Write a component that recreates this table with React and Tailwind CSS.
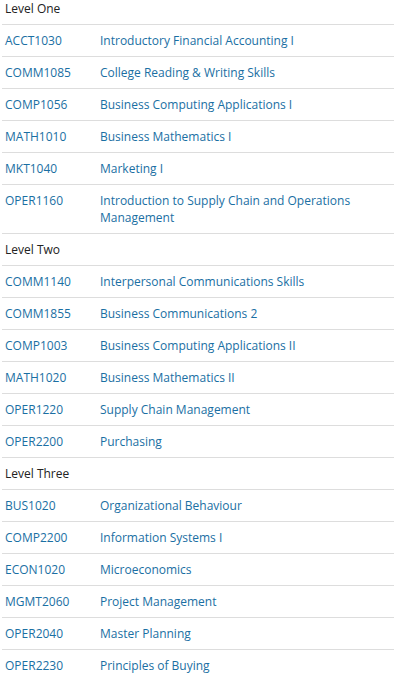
const levels = [
  {
    name: 'Level One',
    courses: [
      ['ACCT1030', 'Introductory Financial Accounting I'],
      ['COMM1085', 'College Reading & Writing Skills'],
      ['COMP1056', 'Business Computing Applications I'],
      ['MATH1010', 'Business Mathematics I'],
      ['MKT1040', 'Marketing I'],
      ['OPER1160', 'Introduction to Supply Chain and Operations Management'],
    ],
  },
  {
    name: 'Level Two',
    courses: [
      ['COMM1140', 'Interpersonal Communications Skills'],
      ['COMM1855', 'Business Communications 2'],
      ['COMP1003', 'Business Computing Applications II'],
      ['MATH1020', 'Business Mathematics II'],
      ['OPER1220', 'Supply Chain Management'],
      ['OPER2200', 'Purchasing'],
    ],
  },
  {
    name: 'Level Three',
    courses: [
      ['BUS1020', 'Organizational Behaviour'],
      ['COMP2200', 'Information Systems I'],
      ['ECON1020', 'Microeconomics'],
      ['MGMT2060', 'Project Management'],
      ['OPER2040', 'Master Planning'],
      ['OPER2230', 'Principles of Buying'],
    ],
  },
];

function App() {
  return (
    <div className="bg-white min-h-screen overflow-hidden" style={{ fontFamily: '"Open Sans", sans-serif' }}>
      <div className="-mt-2 ml-[2px] text-[12px] leading-[17px]">
        {levels.map((level) => (
          <div key={level.name}>
            {/* Level header */}
            <div className="border-t border-[#dddddd] pl-[3px] py-[7px] text-[#222222]">
              {level.name}
            </div>
            {level.courses.map(([code, title]) => (
              <div
                key={code}
                className="grid grid-cols-[98px_1fr] border-t border-[#dddddd] py-[7px] text-[#1a6fa3]"
              >
                <a href="#" className="pl-[3px]">{code}</a>
                <a href="#" className="pr-2">{title}</a>
              </div>
            ))}
          </div>
        ))}
      </div>
    </div>
  );
}

export default App;
